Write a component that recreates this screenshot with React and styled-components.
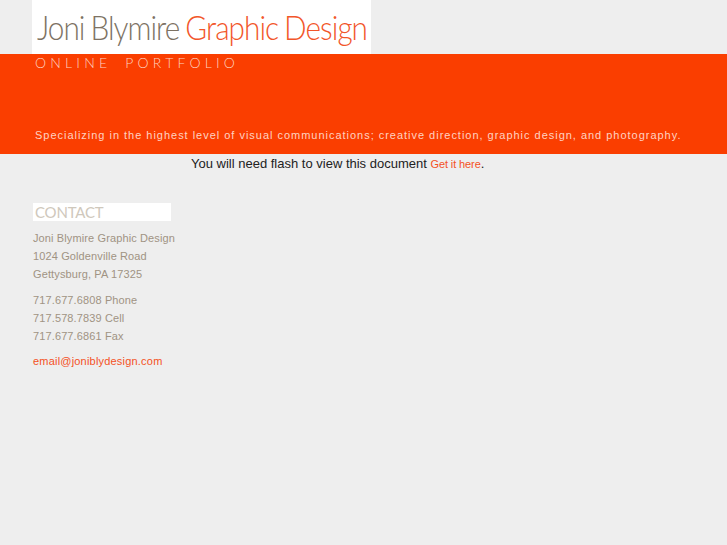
import React from 'react';
import styled, { createGlobalStyle } from 'styled-components';

const Global = createGlobalStyle`
    html, body {
        margin: 0;
        padding: 0;
        background: #eeeeee;
        font-family: 'Liberation Sans', Arial, sans-serif;
    }
`;

const Page = styled.div`
    width: 727px;
    height: 545px;
    overflow: hidden;
`;

const LogoRow = styled.div`
    height: 54px;
    padding-left: 32px;
`;

const Logo = styled.div`
    width: 339px;
    height: 54px;
    box-sizing: border-box;
    padding: 7px 0 0 5px;
    background: #fff;
    overflow: hidden;
`;

const LogoText = styled.div`
    font-family: Lato, sans-serif;
    font-weight: 300;
    font-size: 33px;
    line-height: 40px;
    letter-spacing: -1.05px;
    word-spacing: -1.3px;
    white-space: nowrap;
    transform: scaleX(0.9);
    transform-origin: left center;
`;

const LogoPart = styled.span`
    color: ${p => p.$color};
`;

const Band = styled.div`
    height: 100px;
    box-sizing: border-box;
    background: #fa3e00;
    padding: 0 0 0 35px;
    display: flex;
    flex-direction: column;
    justify-content: space-between;
`;

const Portfolio = styled.div`
    color: #ffd0bf;
    font-family: Lato, sans-serif;
    font-weight: 300;
    font-size: 14px;
    line-height: 17px;
    letter-spacing: 4.2px;
    word-spacing: 6px;
    white-space: nowrap;
`;

const Tagline = styled.div`
    color: #ffd2c2;
    font-size: 11px;
    line-height: 13px;
    margin-bottom: 12px;
    letter-spacing: 0.98px;
    white-space: nowrap;
`;

const Flash = styled.p`
    margin: 0;
    padding: 2px 0 0 191px;
    color: #222;
    font-size: 13px;
    line-height: 15px;
`;

const FlashLink = styled.a`
    color: #f4511e;
    font-size: 11px;
    letter-spacing: -0.1px;
`;

const Sidebar = styled.div`
    width: 138px;
    margin: 31px 0 0 33px;
    display: flex;
    flex-direction: column;
`;

const ContactTitle = styled.div`
    height: 18px;
    background: #fff;
    color: #cfc8bc;
    padding-left: 2px;
    font-family: Lato, sans-serif;
    font-weight: 400;
    font-size: 15px;
    line-height: 18px;
    letter-spacing: -0.2px;
`;

const Block = styled.div`
    margin-top: ${p => p.$top}px;
    color: #a09383;
    font-size: 11px;
    line-height: 18px;
    letter-spacing: 0.12px;
    white-space: nowrap;
`;

const Email = styled.a`
    color: #f4511e;
    letter-spacing: 0.2px;
`;

export default function App() {
    return (
        <Page>
            <Global />
            <LogoRow>
                <Logo>
                    <LogoText>
                        <LogoPart $color="#7d7263">Joni Blymire </LogoPart>
                        <LogoPart $color="#f2562a">Graphic Design</LogoPart>
                    </LogoText>
                </Logo>
            </LogoRow>
            <Band>
                <Portfolio>ONLINE PORTFOLIO</Portfolio>
                <Tagline>
                    Specializing in the highest level of visual communications; creative direction, graphic design, and photography.
                </Tagline>
            </Band>
            <Flash>
                You will need flash to view this document <FlashLink>Get it here</FlashLink>.
            </Flash>
            <Sidebar>
                <ContactTitle>CONTACT</ContactTitle>
                <Block $top={8}>
                    Joni Blymire Graphic Design<br />
                    1024 Goldenville Road<br />
                    Gettysburg, PA 17325
                </Block>
                <Block $top={8}>
                    717.677.6808 Phone<br />
                    717.578.7839 Cell<br />
                    717.677.6861 Fax
                </Block>
                <Block $top={7}>
                    <Email>email@joniblydesign.com</Email>
                </Block>
            </Sidebar>
        </Page>
    );
}
